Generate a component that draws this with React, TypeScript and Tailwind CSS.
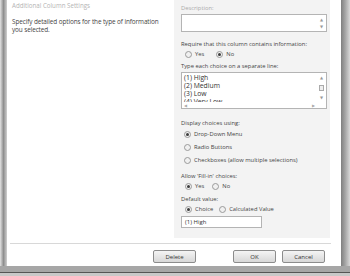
import React from 'react';

const font = { fontFamily: '"Open Sans", "DejaVu Sans", sans-serif' };

const Radio: React.FC<{ checked?: boolean; label: string }> = ({ checked, label }) => (
  <label className="flex items-center gap-[3px]">
    <span className="w-[7px] h-[7px] rounded-full border border-[#9a9a9a] bg-[#f0f0f0] flex items-center justify-center">
      {checked && <span className="w-[3px] h-[3px] rounded-full bg-[#3c3c3c]" />}
    </span>
    <span>{label}</span>
  </label>
);

const Btn: React.FC<{ label: string; className?: string }> = ({ label, className }) => (
  <button
    className={`h-[13px] w-[43px] rounded-[2px] border border-[#8c8c8c] bg-gradient-to-b from-[#f4f4f4] to-[#d8d8d8] text-[6px] text-[#333] leading-none ${className ?? ''}`}
  >
    {label}
  </button>
);

export default function App() {
  return (
    <div className="w-[350px] h-[276px] flex flex-col bg-[#9c9c9c] overflow-hidden" style={font}>
      <div className="flex flex-1 min-h-0">
        {/* left frame */}
        <div className="w-[7px] bg-gradient-to-r from-[#e4e4e4] via-[#8f8f8f] to-[#d0d0d0]" />

        {/* content */}
        <div className="flex-1 bg-white flex flex-col">
          <div className="flex h-[238px]">
            <div className="w-[167px] pl-[5px] pt-[2px] text-[#444]">
              <div className="text-[6.2px] text-[#b4b4b4] leading-[8px]">Additional Column Settings</div>
              <p className="mt-[8px] text-[6.4px] leading-[8px] tracking-[-0.1px] whitespace-nowrap">
                Specify detailed options for the type of information
                <br />
                you selected.
              </p>
            </div>

            <div className="w-[156px] bg-[#f3f3f3] pl-[7px] pr-[3px] pt-[5px] text-[5.8px] text-[#444] leading-[7px]">
              <div className="text-[#aaa]">Description:</div>
              <div className="mt-[2px] h-[18px] border border-[#b4b4b4] bg-white flex justify-end">
                <div className="w-[9px] flex flex-col items-center justify-between text-[#999] text-[4px] py-[1px]">
                  <span>▲</span>
                  <span>▼</span>
                </div>
              </div>

              <div className="mt-[9px]">Require that this column contains information:</div>
              <div className="mt-[3px] ml-[4px] flex gap-[12px]">
                <Radio label="Yes" />
                <Radio checked label="No" />
              </div>

              <div className="mt-[5px]">Type each choice on a separate line:</div>
              <div className="mt-[2px] h-[37px] border border-[#b4b4b4] bg-white flex flex-col">
                <div className="flex flex-1 min-h-0">
                  <div className="flex-1 overflow-hidden pl-[2px] pt-[1px] text-[6.8px] leading-[8px] text-[#333]">
                    <div>(1) High</div>
                    <div>(2) Medium</div>
                    <div>(3) Low</div>
                    <div>(4) Very Low</div>
                  </div>
                  <div className="w-[9px] flex flex-col items-center justify-between text-[#999] text-[4px] py-[1px]">
                    <span>▲</span>
                    <span className="w-[5px] h-[6px] border border-[#aaa] bg-[#eee]" />
                    <span>▼</span>
                  </div>
                </div>
                <div className="h-[6px] flex justify-between items-center px-[2px] text-[4px] text-[#aaa] mr-[9px]">
                  <span>◀</span>
                  <span>▶</span>
                </div>
              </div>

              <div className="mt-[11px]">Display choices using:</div>
              <div className="mt-[4px] ml-[3px] flex flex-col gap-[6px]">
                <Radio checked label="Drop-Down Menu" />
                <Radio label="Radio Buttons" />
                <Radio label="Checkboxes (allow multiple selections)" />
              </div>

              <div className="mt-[9px]">Allow 'Fill-in' choices:</div>
              <div className="mt-[3px] ml-[4px] flex gap-[8px]">
                <Radio checked label="Yes" />
                <Radio label="No" />
              </div>

              <div className="mt-[6px]">Default value:</div>
              <div className="mt-[3px] ml-[4px] flex gap-[6px]">
                <Radio checked label="Choice" />
                <Radio label="Calculated Value" />
              </div>
              <div className="mt-[3px] w-[81px] h-[12px] border border-[#b4b4b4] bg-white pl-[3px] text-[6px] leading-[10px] text-[#333]">
                (1) High
              </div>
            </div>
          </div>

          <div className="ml-[3px] mr-[10px] mt-[5px] h-px bg-[#d8d8d8]" />

          <div className="flex mt-[6px]">
            <Btn label="Delete" className="ml-[146px]" />
            <Btn label="OK" className="ml-[37px]" />
            <Btn label="Cancel" className="ml-[6px]" />
          </div>
        </div>

        {/* right frame */}
        <div className="w-[9px] bg-gradient-to-r from-[#7f7f7f] via-[#a8a8a8] to-[#d8d8d8]" />
      </div>

      {/* bottom frame */}
      <div className="h-[10px] flex flex-col">
        <div className="h-[6px] bg-[#a6a6a6]" />
        <div className="h-px bg-[#555]" />
        <div className="flex-1 bg-[#c8c8c8]" />
      </div>
    </div>
  );
}
